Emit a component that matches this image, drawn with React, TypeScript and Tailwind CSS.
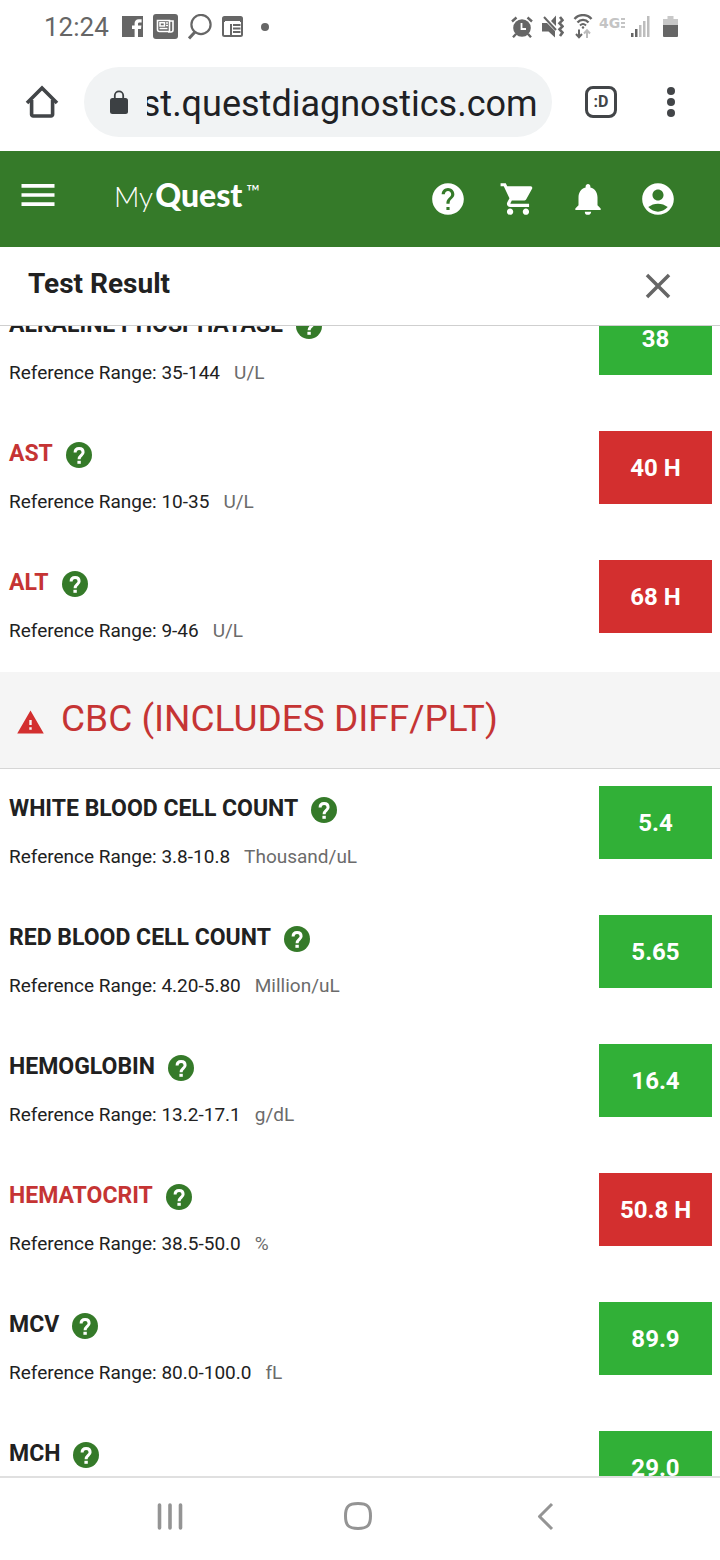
import { useLayoutEffect, useRef, useState } from "react";
import {
  MdAccountCircle,
  MdClose,
  MdHelp,
  MdMenu,
  MdNotifications,
  MdShoppingCart,
  MdWarning,
} from "react-icons/md";

type Result = { name: string; range: string; unit: string; value: string; high?: boolean };

const METABOLIC: Result[] = [
  { name: "ALKALINE PHOSPHATASE", range: "35-144", unit: "U/L", value: "38" },
  { name: "AST", range: "10-35", unit: "U/L", value: "40 H", high: true },
  { name: "ALT", range: "9-46", unit: "U/L", value: "68 H", high: true },
];

const CBC: Result[] = [
  { name: "WHITE BLOOD CELL COUNT", range: "3.8-10.8", unit: "Thousand/uL", value: "5.4" },
  { name: "RED BLOOD CELL COUNT", range: "4.20-5.80", unit: "Million/uL", value: "5.65" },
  { name: "HEMOGLOBIN", range: "13.2-17.1", unit: "g/dL", value: "16.4" },
  { name: "HEMATOCRIT", range: "38.5-50.0", unit: "%", value: "50.8 H", high: true },
  { name: "MCV", range: "80.0-100.0", unit: "fL", value: "89.9" },
  { name: "MCH", range: "27.0-33.0", unit: "pg", value: "29.0" },
];

function StatusBar() {
  return (
    <div className="flex h-[53px] shrink-0 items-center justify-between pl-11 pr-[42px] text-[#666]">
      <div className="flex items-center gap-[10px]">
        <span className="mr-[3px] text-[26px] leading-8">12:24</span>
        <svg width="21" height="21" viewBox="0 0 21 21">
          <path fill="currentColor" d="M0 0h21v21h-5v-8h3l.4-3.4H16V8c0-1 .4-1.5 1.6-1.5h2V3.300h-2.800C14 3.300 12.600 5 12.600 7.300v2.300H10V13h2.600v8H0z" />
        </svg>
        <svg width="25" height="25" viewBox="0 0 25 25" fill="none">
          <rect width="25" height="25" rx="3" fill="currentColor" />
          <path stroke="#fff" strokeWidth="1.600" d="M4.500 6.500h12v11h-10a2 2 0 0 1-2-2zM16.500 7h3.500v9a2 2 0 0 1-2 2h-3M6.500 14.500h8M13 9h2M13 11.500h2" />
          <path stroke="#fff" strokeWidth="1.600" d="M7 8.800h4.500v3.200H7z" />
        </svg>
        <svg width="24" height="26" viewBox="0 0 24 26" fill="none" stroke="currentColor">
          <circle cx="13" cy="10.500" r="9.600" strokeWidth="2.200" />
          <path strokeWidth="3" d="M7 18l-6 6.500" />
        </svg>
        <svg width="21" height="21" viewBox="0 0 21 21" fill="none" stroke="currentColor">
          <rect x="1" y="1" width="19" height="19" rx="1.500" strokeWidth="2" />
          <path strokeWidth="4" d="M1 4h19" />
          <path strokeWidth="2" d="M9 8v12M11 9h7.500M11 12.500h7.500M11 16h7.500" />
          <path stroke="#fff" strokeWidth="1" d="M3 5.500h15" />
        </svg>
        <span className="ml-2 size-2 rounded-full bg-current" />
      </div>

      <div className="flex items-center gap-[9px]">
        <svg width="22" height="22" viewBox="0 0 22 22" fill="none" stroke="currentColor">
          <circle cx="11" cy="12" r="8.800" fill="currentColor" stroke="none" />
          <path strokeWidth="2.400" d="M1 5.500L5.500 1.500M21 5.500L16.500 1.500M5 18l-3 3.200M17 18l3 3.200" />
          <path stroke="#fff" strokeWidth="1.800" d="M10.500 7v6h4.500" />
        </svg>
        <svg width="22" height="23" viewBox="0 0 22 23" fill="none" stroke="currentColor">
          <path fill="currentColor" stroke="none" d="M0 8h5l8 8v6.500l-6.500-6H0zM9 6l5-5.500V11z" />
          <path strokeWidth="2" d="M2 2l12 13" />
          <path strokeWidth="2.600" d="M18 2l2.500 3.200-3 3 3 3.200-3 3 3 3.200-2.500 3.400" />
        </svg>
        <svg width="20" height="25" viewBox="0 0 20 25" fill="none" stroke="currentColor">
          <path strokeWidth="2.400" d="M1.500 5C6-.2 14-.2 18.500 5M4.500 8.500c3-3.500 8-3.500 11 0" />
          <path strokeWidth="2" d="M7 11.500c1.800-1.800 4.200-1.800 6 0" />
          <circle cx="10" cy="13.500" r="1.200" fill="currentColor" stroke="none" />
          <path strokeWidth="2" d="M6 15.500V23M3 20l3 3.200L9 20" />
          <path stroke="#bbb" strokeWidth="2" d="M14 24v-7.500M11 19.500l3-3.200 3 3.200" />
        </svg>
        <span className="-mx-[3px] mb-2 flex w-[26px] items-center justify-between text-[#c4c4c4]">
          <span className="font-['DejaVu_Sans',sans-serif] text-sm font-bold leading-4">4G</span>
          <svg width="4" height="10" viewBox="0 0 4 10" stroke="currentColor" strokeWidth="2">
            <path d="M0 1h4M0 5h4M0 9h4" />
          </svg>
        </span>
        <svg width="19" height="21" viewBox="0 0 19 21">
          <path fill="currentColor" d="M0 17h2.500v4H0zM4 13h2.500v8H4z" />
          <path fill="#bdbdbd" d="M8 9h2.500v12H8zM12 5h2.500v16H12zM16 0h2.500v21H16z" />
        </svg>
        <svg className="ml-1" width="15" height="21" viewBox="0 0 15 21">
          <path fill="#c8c8c8" d="M4.500 0h6v3H15v6H0V3h4.500z" />
          <path fill="currentColor" d="M0 9h15v11a1 1 0 0 1-1 1H1a1 1 0 0 1-1-1z" />
        </svg>
      </div>
    </div>
  );
}

function AddressBar() {
  const [url, setUrl] = useState("myquest.questdiagnostics.com");
  const input = useRef<HTMLInputElement>(null);

  // keep the end of the host name in view
  useLayoutEffect(() => {
    if (input.current) input.current.scrollLeft = input.current.scrollWidth;
  }, []);

  return (
    <div className="flex h-[98px] shrink-0 items-center pl-6 pr-[41px] text-[#424548]">
      <button aria-label="Home" className="mr-6">
        <svg width="36" height="36" viewBox="0 0 36 36" fill="none" stroke="currentColor" strokeWidth="3.600">
          <path strokeLinejoin="round" d="M7.600 16v14.500a1.500 1.500 0 0 0 1.500 1.500h18a1.500 1.500 0 0 0 1.500-1.500V16" />
          <path d="M3 19L18 4l15 15" />
        </svg>
      </button>
      <div className="flex h-[70px] min-w-0 flex-1 items-center rounded-full bg-[#f1f3f4] pl-[26px] pr-[14px]">
        <svg className="mr-[19px] shrink-0" width="18" height="24" viewBox="0 0 18 24">
          <rect y="8" width="18" height="16" rx="2.500" fill="#3c4043" />
          <path d="M4.800 9V5.500a4.200 4.200 0 0 1 8.400 0V9" fill="none" stroke="#3c4043" strokeWidth="1.800" />
        </svg>
        <input
          ref={input}
          aria-label="Address"
          value={url}
          onChange={(e) => setUrl(e.target.value)}
          className="h-14 w-full min-w-0 bg-transparent pt-1 text-4xl text-[#202124] outline-none"
        />
      </div>
      <button aria-label="Switch tabs" className="ml-[33px] flex size-8 shrink-0 items-center justify-center rounded-lg border-[3px] border-current text-base font-bold leading-none">
        :D
      </button>
      <button aria-label="More options" className="ml-[46px] flex w-4 shrink-0 flex-col items-center gap-[3px]">
        <span className="size-2 rounded-full bg-current" />
        <span className="size-2 rounded-full bg-current" />
        <span className="size-2 rounded-full bg-current" />
      </button>
    </div>
  );
}

function SiteHeader() {
  return (
    <header className="flex h-24 shrink-0 items-center justify-between bg-[#357a29] pl-4 pr-[43px] text-white">
      <div className="flex items-center pb-2">
        <button aria-label="Menu"><MdMenu size={44} /></button>
        <a href="#" className="ml-[54px] flex items-baseline font-['Lato',sans-serif] leading-8">
          <span className="text-[28px] font-light">My</span>
          <span className="ml-0.5 text-[32px] font-black">Quest</span>
          <span className="ml-1 self-start text-lg leading-6">™</span>
        </a>
      </div>
      <nav className="flex gap-8">
        <button aria-label="Help"><MdHelp size={38} /></button>
        <button aria-label="Cart"><MdShoppingCart size={38} /></button>
        <button aria-label="Notifications"><MdNotifications size={38} /></button>
        <button aria-label="Account"><MdAccountCircle size={38} /></button>
      </nav>
    </header>
  );
}

function HelpIcon() {
  return (
    <svg width="26" height="26" viewBox="0 0 26 26" fill="none">
      <circle cx="13" cy="13" r="13" fill="#357a29" />
      <path stroke="#fff" strokeWidth="3" d="M9.100 10.500c0-2.400 1.600-4 4-4s4 1.500 4 3.700c0 3.200-4 3.300-4 7" />
      <path fill="#fff" d="M11.400 18.800h3.400v3h-3.400z" />
    </svg>
  );
}

function ResultRow({ result }: { result: Result }) {
  return (
    <li className="flex h-[129px] items-start justify-between pl-[9px] pr-2 pt-[17px]">
      <div className="pt-[5px]">
        <div className="flex items-center gap-[13px]">
          <h3 className={`text-[23px] font-bold leading-9 ${result.high ? "text-[#c53434]" : "text-[#212121]"}`}>
            {result.name}
          </h3>
          <button aria-label={`About ${result.name}`} className="pt-0.5"><HelpIcon /></button>
        </div>
        <p className="mt-4 text-[19px] leading-7 text-[#212121]">
          Reference Range: {result.range}
          <span className="ml-[14px] text-[#6b6b6b]">{result.unit}</span>
        </p>
      </div>
      <div className={`flex h-[73px] w-[113px] items-center justify-center text-2xl font-bold text-white ${result.high ? "bg-[#d32f2f]" : "bg-[#31b037]"}`}>
        {result.value}
      </div>
    </li>
  );
}

export default function App() {
  const list = useRef<HTMLDivElement>(null);

  useLayoutEffect(() => {
    if (list.current) list.current.scrollTop = 41;
  }, []);

  return (
    <div className="flex h-screen flex-col bg-white font-['Roboto',sans-serif]">
      <StatusBar />
      <AddressBar />
      <SiteHeader />

      <div className="flex h-[79px] shrink-0 items-center justify-between border-b border-[#cfcfcf] pl-7 pr-[41px]">
        <h1 className="pb-1 text-[28px] font-bold text-[#212121]">Test Result</h1>
        <button aria-label="Close" className="text-[#666]"><MdClose size={42} /></button>
      </div>

      <main ref={list} className="min-h-0 flex-1 overflow-y-auto [scrollbar-width:none]">
        <ul>
          {METABOLIC.map((r) => <ResultRow key={r.name} result={r} />)}
        </ul>
        <div className="flex h-[97px] items-center border-b border-[#d6d6d6] bg-[#f5f5f5] pl-4 text-[#c53434]">
          <MdWarning size={29} className="mt-1 text-[#d32f2f]" />
          <h2 className="ml-4 pb-0.5 text-[37px]">CBC (INCLUDES DIFF/PLT)</h2>
        </div>
        <ul>
          {CBC.map((r) => <ResultRow key={r.name} result={r} />)}
        </ul>
      </main>

      <nav className="flex h-[84px] shrink-0 items-center justify-between border-t-2 border-[#e0e0e0] pb-1.5 pl-[154px] pr-[159px] text-[#949494]">
        <button aria-label="Recent apps">
          <svg width="32" height="32" viewBox="0 0 32 32" stroke="currentColor" strokeWidth="3.600" strokeLinecap="round">
            <path d="M5.500 5v23M16 5v23M26.500 5v23" />
          </svg>
        </button>
        <button aria-label="Home screen">
          <svg width="32" height="32" viewBox="0 0 32 32" fill="none" stroke="currentColor" strokeWidth="3">
            <path d="M16 3.500c9.500 0 12.500 3 12.500 12.500S25.500 28.500 16 28.500 3.500 25.500 3.500 16 6.500 3.500 16 3.500z" />
          </svg>
        </button>
        <button aria-label="Back">
          <svg width="32" height="32" viewBox="0 0 32 32" fill="none" stroke="currentColor" strokeWidth="3">
            <path d="M23 4L10.500 16.500 23 29" strokeLinejoin="round" />
          </svg>
        </button>
      </nav>
    </div>
  );
}
